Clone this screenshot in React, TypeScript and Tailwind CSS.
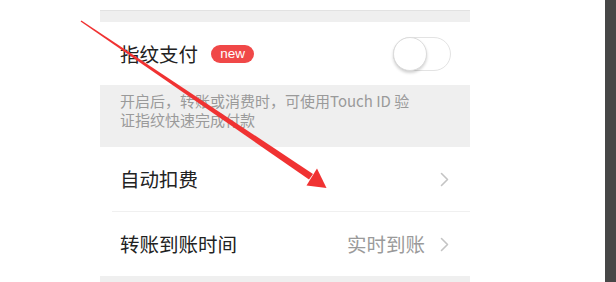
import { ReactNode } from "react";

const cjk = { fontFamily: '"Noto Sans CJK SC", "Noto Sans", sans-serif' };

function Chevron() {
  return (
    <svg width="9" height="15" viewBox="0 0 9 15" fill="none" className="shrink-0">
      <path d="M1.5 1.5 L7.5 7.5 L1.5 13.5" stroke="#c4c4c4" strokeWidth="1.6" strokeLinecap="round" strokeLinejoin="round" />
    </svg>
  );
}

function Row({ title, children, className = "" }: { title: ReactNode; children?: ReactNode; className?: string }) {
  return (
    <div className={`flex items-center justify-between bg-white pl-5 pr-[21px] ${className}`}>
      <div className="flex items-center text-[19.5px] text-[#222]">{title}</div>
      <div className="flex items-center">{children}</div>
    </div>
  );
}

function Toggle() {
  return (
    <div className="relative mr-[-2px] h-[34px] w-[58px] rounded-full border border-[#e3e3e3] bg-white">
      <div className="absolute left-[-1px] top-[-1px] h-[34px] w-[34px] rounded-full border border-[#dcdcdc] bg-white shadow-[0_2px_3px_rgba(0,0,0,0.18)]" />
    </div>
  );
}

function RedArrow() {
  // tapering red shaft plus triangular head, drawn over the list
  return (
    <svg className="pointer-events-none absolute inset-0" width="616" height="282" viewBox="0 0 616 282">
      <polygon points="80.6,21.6 81.4,20.4 313,174 309,179.5" fill="#f03232" />
      <polygon points="317,168.5 326.5,188 306.5,185.5" fill="#f03232" />
    </svg>
  );
}

export default function App() {
  return (
    <div className="relative flex h-[282px] w-[616px] overflow-hidden bg-white" style={cjk}>
      <div className="w-[100px] shrink-0" />
      <div className="flex w-[370px] shrink-0 flex-col">
        <div className="h-[10px] bg-white" />
        <div className="h-[12px] border-t border-[#e2e2e2] bg-[#efefef]" />
        <Row title={<>指纹支付<span className="ml-[13px] flex h-[18px] w-[43px] items-center justify-center rounded-full bg-[#f04848] text-[13.5px] leading-none text-white" style={{ fontFamily: '"Liberation Sans", Arial, sans-serif' }}>new</span></>} className="h-[63px]">
          <Toggle />
        </Row>
        <div className="h-[62px] bg-[#efefef] pl-5 pt-[6px] text-[15px] leading-[19px] text-[#9a9a9a]">
          <div>开启后，转账或消费时，可使用Touch ID 验</div>
          <div>证指纹快速完成付款</div>
        </div>
        <Row title="自动扣费" className="h-[64px]">
          <Chevron />
        </Row>
        <div className="bg-white pl-3">
          <div className="h-px bg-[#f0f0f0]" />
        </div>
        <Row title="转账到账时间" className="h-[64px]">
          <span className="mr-[15px] text-[19.5px] text-[#9a9a9a]">实时到账</span>
          <Chevron />
        </Row>
        <div className="flex-1 bg-[#efefef]" />
      </div>
      <div className="flex-1" />
      <div className="w-[11px] shrink-0 bg-[#474747]" />
      <RedArrow />
    </div>
  );
}
